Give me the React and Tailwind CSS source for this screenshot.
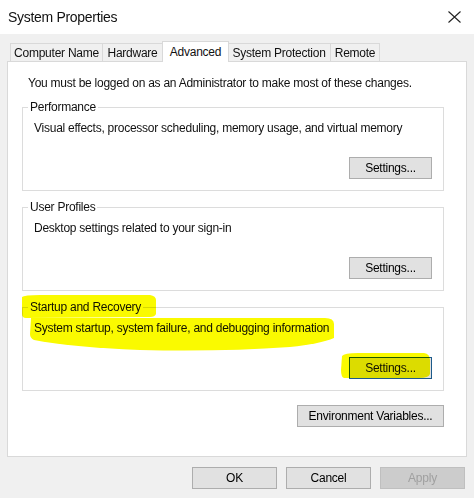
import React from 'react';

const tabs = [
    { label: 'Computer Name', w: 'w-[93px]' },
    { label: 'Hardware', w: 'w-[61px]' },
    { label: 'Advanced', w: 'w-[67px]', active: true },
    { label: 'System Protection', w: 'w-[104px]' },
    { label: 'Remote', w: 'w-[50px]' },
];

const btn = 'h-[22px] border border-[#adadad] bg-[#e1e1e1] flex items-center justify-center text-black';

const Group = ({ title, text, focused }) => (
    <fieldset className="h-[91px] border border-[#dcdcdc] px-[11px]">
        <legend className="-ml-[6px] px-[2px] leading-[15px]">{title}</legend>
        <div className="mt-[5px] leading-[16px]">{text}</div>
        <div className="mt-[21px] flex justify-end">
            <button
                className={
                    focused
                        ? 'w-[83px] h-[22px] border border-[#1d5a8a] bg-[#e1e1e1] flex items-center justify-center'
                        : 'w-[83px] ' + btn
                }
            >
                Settings...
            </button>
        </div>
    </fieldset>
);

const App = () => {
    return (
        <div className="relative w-[474px] h-[498px] overflow-hidden whitespace-nowrap bg-[#f0f0f0] text-[12px] tracking-[-0.25px] text-[#111] font-['Liberation_Sans',Arial,sans-serif]">
            {/* title bar */}
            <div className="h-[34px] bg-white flex items-center justify-between pl-[8px] pr-[12px]">
                <span className="text-[14px] tracking-[-0.3px]">System Properties</span>
                <svg width="15" height="12" viewBox="0 0 15 12">
                    <path d="M1.5 0.5 L13.5 11.5 M13.5 0.5 L1.5 11.5" stroke="#222" strokeWidth="1.1" fill="none" />
                </svg>
            </div>

            <div className="px-[7px] pt-[7px]">
                {/* tabs */}
                <div className="flex items-end h-[20px] pl-[3px]">
                    {tabs.map((t) =>
                        t.active ? (
                            <div
                                key={t.label}
                                className={t.w + ' relative z-10 -mb-px h-[21px] bg-white border border-b-0 border-[#d9d9d9] flex items-start justify-center pt-[1px] -mx-px'}
                            >
                                {t.label}
                            </div>
                        ) : (
                            <div
                                key={t.label}
                                className={t.w + ' h-[18px] bg-[#f0f0f0] border border-b-0 border-[#d9d9d9] -ml-px first:ml-0 flex items-center justify-center'}
                            >
                                {t.label}
                            </div>
                        )
                    )}
                </div>

                {/* page */}
                <div className="h-[396px] bg-white border border-[#d9d9d9] pl-[14px] pr-[22px] pt-[13px]">
                    <div className="ml-[6px] leading-[16px]">
                        You must be logged on as an Administrator to make most of these changes.
                    </div>
                    <div className="mt-[9px] flex flex-col gap-[9px]">
                        <Group
                            title="Performance"
                            text="Visual effects, processor scheduling, memory usage, and virtual memory"
                        />
                        <Group title="User Profiles" text="Desktop settings related to your sign-in" />
                        <Group
                            title="Startup and Recovery"
                            text="System startup, system failure, and debugging information"
                            focused
                        />
                    </div>
                    <div className="mt-[14px] flex justify-end">
                        <button className={'w-[147px] ' + btn}>Environment Variables...</button>
                    </div>
                </div>

                {/* dialog buttons */}
                <div className="mt-[10px] flex justify-end gap-[9px] pr-[2px]">
                    <button className={'w-[85px] ' + btn}>OK</button>
                    <button className={'w-[85px] ' + btn}>Cancel</button>
                    <button className="w-[85px] h-[22px] border border-[#bfbfbf] bg-[#cccccc] text-[#a0a0a0] flex items-center justify-center">
                        Apply
                    </button>
                </div>
            </div>

            {/* highlighter marks */}
            <svg
                className="absolute top-0 left-0 pointer-events-none mix-blend-multiply"
                width="474"
                height="498"
                viewBox="0 0 474 498"
            >
                <g fill="#fafa00">
                    <path d="M22 297 Q24 295 40 295 L150 295 Q156 296 156 300 L156 314 Q155 317 150 317 L26 318 Q22 318 22 314 Z" />
                    <path d="M31 318 L325 318 Q334 318 334 324 L334 338 Q320 344 290 347 Q220 352 140 350 Q70 347 34 340 Q30 338 30 334 Z" />
                    <path d="M342 356 Q344 353 358 353 L424 353 Q430 354 430 360 L430 374 Q429 378 419 378 L344 378 Q341 377 341 370 Z" />
                </g>
            </svg>
        </div>
    );
};

export default App;
